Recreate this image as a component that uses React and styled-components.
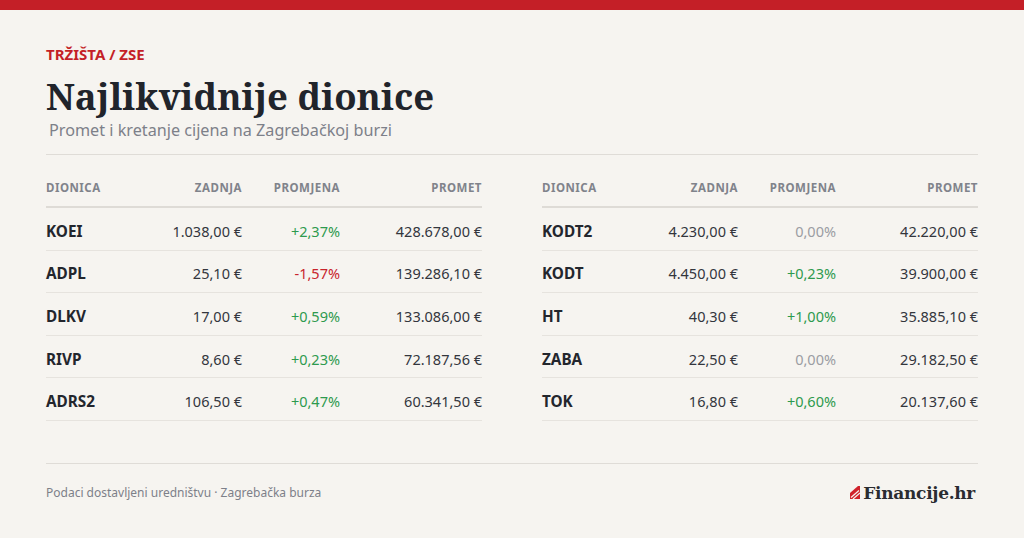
import React from "react";
import styled, { createGlobalStyle } from "styled-components";

const Global = createGlobalStyle`
  html, body { margin: 0; padding: 0; background: #f6f4f0; }
  body { font-family: "Noto Sans", "Open Sans", sans-serif; color: #23262d; }
`;

const Page = styled.div`
  width: 1024px;
  height: 538px;
  background: #f6f4f0;
  display: flex;
  flex-direction: column;
  overflow: hidden;
`;

const TopBar = styled.div`
  height: 10px;
  background: #c41f27;
  flex: none;
`;

const Content = styled.div`
  padding: 34px 46px 0 46px;
  display: flex;
  flex-direction: column;
`;

const Kicker = styled.div`
  font-size: 15px;
  font-weight: 700;
  color: #c41f27;
  line-height: 20px;
`;

const Title = styled.h1`
  margin: 12px 0 0 0;
  font-family: "Noto Serif", "DejaVu Serif", serif;
  font-weight: 700;
  font-size: 36.6px;
  line-height: 40px;
  color: #21242b;
`;

const Subtitle = styled.div`
  margin: 3px 0 0 3px;
  font-size: 16.2px;
  line-height: 22px;
  color: #7d8089;
`;

const Divider = styled.div`
  height: 1px;
  background: #dfdcd7;
  margin-top: ${(p) => p.$top || 0}px;
`;

const Tables = styled.div`
  display: grid;
  grid-template-columns: 436px 436px;
  justify-content: space-between;
  margin-top: 13px;
`;

const Table = styled.div`
  display: flex;
  flex-direction: column;
`;

const Row = styled.div`
  display: grid;
  grid-template-columns: 1fr 96px 98px 142px;
  align-items: center;
  box-sizing: border-box;
  height: ${(p) => (p.$head ? 40 : 42.6)}px;
  padding-top: ${(p) => (p.$head ? 0 : 4)}px;
  border-bottom: ${(p) => (p.$head ? "2px solid #dedbd6" : "1px solid #e6e3de")};
`;

const Head = styled.div`
  font-size: 11.5px;
  font-weight: 700;
  letter-spacing: 0.5px;
  color: #80838b;
  text-align: ${(p) => (p.$left ? "left" : "right")};
`;

const Ticker = styled.div`
  font-size: 15.3px;
  font-weight: 700;
  color: #23262d;
`;

const Cell = styled.div`
  font-size: 14.5px;
  text-align: right;
  color: ${(p) =>
    p.$tone === "up" ? "#2e9a4e" : p.$tone === "down" ? "#c8232c" : p.$tone === "flat" ? "#9b9da3" : "#33363d"};
`;

const Footer = styled.div`
  display: flex;
  align-items: center;
  justify-content: space-between;
  margin-top: 19px;
`;

const Source = styled.div`
  font-size: 12px;
  color: #7d8089;
`;

const Logo = styled.div`
  display: flex;
  align-items: center;
  gap: 3px;
  margin-right: 3px;
`;

const LogoText = styled.span`
  font-family: "DejaVu Serif", "Noto Serif", serif;
  font-weight: 700;
  font-size: 17px;
  letter-spacing: -0.3px;
  color: #2a2c31;
`;

const left = [
  ["KOEI", "1.038,00 €", "+2,37%", "428.678,00 €"],
  ["ADPL", "25,10 €", "-1,57%", "139.286,10 €"],
  ["DLKV", "17,00 €", "+0,59%", "133.086,00 €"],
  ["RIVP", "8,60 €", "+0,23%", "72.187,56 €"],
  ["ADRS2", "106,50 €", "+0,47%", "60.341,50 €"],
];
const right = [
  ["KODT2", "4.230,00 €", "0,00%", "42.220,00 €"],
  ["KODT", "4.450,00 €", "+0,23%", "39.900,00 €"],
  ["HT", "40,30 €", "+1,00%", "35.885,10 €"],
  ["ZABA", "22,50 €", "0,00%", "29.182,50 €"],
  ["TOK", "16,80 €", "+0,60%", "20.137,60 €"],
];

const tone = (c) => (c.startsWith("+") ? "up" : c.startsWith("-") ? "down" : "flat");

function StockTable({ rows }) {
  return (
    <Table>
      <Row $head>
        <Head $left>DIONICA</Head>
        <Head>ZADNJA</Head>
        <Head>PROMJENA</Head>
        <Head>PROMET</Head>
      </Row>
      {rows.map((r) => (
        <Row key={r[0]}>
          <Ticker>{r[0]}</Ticker>
          <Cell>{r[1]}</Cell>
          <Cell $tone={tone(r[2])}>{r[2]}</Cell>
          <Cell>{r[3]}</Cell>
        </Row>
      ))}
    </Table>
  );
}

function LogoMark() {
  return (
    <svg width="10" height="13" viewBox="0 0 10 13">
      <path d="M0 13 L0 7 L8 0 L10 0 L10 13 Z" fill="#d0222b" />
      <path d="M1 11.5 L9 4.5" stroke="#f6f4f0" strokeWidth="1.2" />
      <path d="M3 13 L10 7" stroke="#f6f4f0" strokeWidth="1.2" />
    </svg>
  );
}

export default function App() {
  return (
    <Page>
      <Global />
      <TopBar />
      <Content>
        <Kicker>TRŽIŠTA / ZSE</Kicker>
        <Title>Najlikvidnije dionice</Title>
        <Subtitle>Promet i kretanje cijena na Zagrebačkoj burzi</Subtitle>
        <Divider $top={13} />
        <Tables>
          <StockTable rows={left} />
          <StockTable rows={right} />
        </Tables>
        <Divider $top={42} />
        <Footer>
          <Source>Podaci dostavljeni uredništvu · Zagrebačka burza</Source>
          <Logo>
            <LogoMark />
            <LogoText>Financije.hr</LogoText>
          </Logo>
        </Footer>
      </Content>
    </Page>
  );
}
